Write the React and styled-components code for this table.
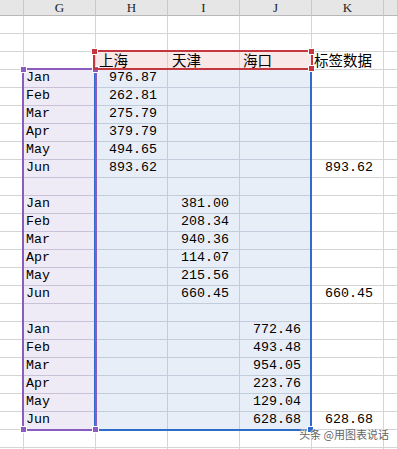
import React from 'react';
import styled, { createGlobalStyle } from 'styled-components';

const GlobalStyle = createGlobalStyle`
  html, body {
    margin: 0;
    padding: 0;
    background: #ffffff;
    overflow: hidden;
  }
  body {
    font-family: "Liberation Mono", "DejaVu Sans Mono", monospace;
  }
`;

const tones = {
  plain: { bg: '#ffffff', line: '#d4d4d4' },
  purple: { bg: '#efebf6', line: '#c9c2d6' },
  blue: { bg: '#e7eef8', line: '#c3ccda' },
  red: { bg: '#f9e8e8', line: '#e2c9ca' },
};

const Sheet = styled.div`
  position: relative;
  width: 398px;
  height: 449px;
  overflow: hidden;
`;

const Grid = styled.div`
  display: grid;
  grid-template-columns: 24px repeat(5, 72px) 1fr;
  grid-template-rows: 16px;
  grid-auto-rows: 18px;
`;

const HeadCell = styled.div`
  box-sizing: border-box;
  background: #e6e6e6;
  border-right: 1px solid #c8c8c8;
  border-bottom: 1px solid #b8b8b8;
  display: flex;
  align-items: center;
  justify-content: center;
  font-family: "Liberation Serif", serif;
  font-size: 13px;
  line-height: 15px;
  color: #222;
`;

const Cell = styled.div`
  box-sizing: border-box;
  background: ${p => tones[p.$tone].bg};
  border-right: 1px solid ${p => tones[p.$tone].line};
  border-bottom: 1px solid ${p => tones[p.$tone].line};
  display: flex;
  align-items: flex-end;
  justify-content: ${p => (p.$right ? 'flex-end' : 'flex-start')};
  padding: 0 ${p => (p.$right ? 10 : 0)}px 1px ${p => (p.$right ? 0 : 2)}px;
  font-size: 13.3px;
  line-height: 16px;
  color: #000;
  white-space: nowrap;
`;

const Cjk = styled.span`
  font-family: "Noto Sans CJK SC", sans-serif;
  font-size: 14.5px;
  line-height: 17px;
  padding-left: ${p => p.$pad}px;
`;

// selection outline drawn over the cells, with its corner handles
const Frame = styled.div`
  position: absolute;
  box-sizing: border-box;
  left: ${p => p.$x}px;
  top: ${p => p.$y}px;
  width: ${p => p.$w}px;
  height: ${p => p.$h}px;
  border: 2px solid ${p => p.$color};
  pointer-events: none;
`;

const Handle = styled.div`
  position: absolute;
  width: 5px;
  height: 5px;
  background: ${p => p.$color};
  box-shadow: 0 0 0 1px #ffffff;
  ${p => (p.$corner.includes('t') ? 'top: -3px;' : 'bottom: -3px;')}
  ${p => (p.$corner.includes('l') ? 'left: -3px;' : 'right: -3px;')}
`;

const Watermark = styled.div`
  position: absolute;
  right: 9px;
  bottom: 8px;
  font-family: "Noto Sans CJK SC", sans-serif;
  font-size: 11px;
  line-height: 14px;
  color: #666666;
  white-space: nowrap;
  text-shadow: 0 0 2px #fff, 0 0 1px #fff, 0 0 1px #fff;
`;

const RED = '#c4373f';
const PURPLE = '#8a5cbf';
const BLUE = '#2f6cc9';

const months = ['Jan', 'Feb', 'Mar', 'Apr', 'May', 'Jun'];

const blocks = [
  { col: 'H', values: ['976.87', '262.81', '275.79', '379.79', '494.65', '893.62'] },
  { col: 'I', values: ['381.00', '208.34', '940.36', '114.07', '215.56', '660.45'] },
  { col: 'J', values: ['772.46', '493.48', '954.05', '223.76', '129.04', '628.68'] },
];

const columns = ['F', 'G', 'H', 'I', 'J', 'K', 'L'];
const letters = { F: '', G: 'G', H: 'H', I: 'I', J: 'J', K: 'K', L: '' };
const titlePad = { H: 1, I: 2, J: 1, K: 0 };

function buildRows() {
  const rows = [{}, {}, { title: true, H: '上海', I: '天津', J: '海口', K: '标签数据' }];
  blocks.forEach((block, b) => {
    months.forEach((m, i) => {
      const row = { data: true, G: m, [block.col]: block.values[i] };
      if (i === 5) row.K = block.values[i];
      rows.push(row);
    });
    if (b < blocks.length - 1) rows.push({ data: true });
  });
  while (rows.length < 25) rows.push({});
  return rows;
}

function toneFor(row, col) {
  if (row.title && ['H', 'I', 'J'].includes(col)) return 'red';
  if (row.data && col === 'G') return 'purple';
  if (row.data && ['H', 'I', 'J'].includes(col)) return 'blue';
  return 'plain';
}

const frames = [
  { x: 94, y: 68, w: 218, h: 363, color: BLUE, handles: ['br'] },
  { x: 22, y: 68, w: 75, h: 363, color: PURPLE, handles: ['tl', 'tr', 'bl', 'br'] },
  { x: 93, y: 50, w: 220, h: 20, color: RED, handles: ['tl', 'tr', 'br'] },
];

export default function App() {
  const rows = buildRows();

  return (
    <Sheet>
      <GlobalStyle />
      <Grid>
        {columns.map(c => (
          <HeadCell key={c}>{letters[c]}</HeadCell>
        ))}
        {rows.map((row, r) =>
          columns.map(c => {
            const value = row[c];
            const isNum = value && /^[\d.]+$/.test(value);
            return (
              <Cell key={`${r}-${c}`} $tone={toneFor(row, c)} $right={isNum}>
                {row.title && value ? <Cjk $pad={titlePad[c]}>{value}</Cjk> : value}
              </Cell>
            );
          })
        )}
      </Grid>

      {frames.map((f, i) => (
        <Frame key={i} $x={f.x} $y={f.y} $w={f.w} $h={f.h} $color={f.color}>
          {f.handles.map(h => (
            <Handle key={h} $corner={h} $color={f.color} />
          ))}
        </Frame>
      ))}

      <Watermark>头条 @用图表说话</Watermark>
    </Sheet>
  );
}
